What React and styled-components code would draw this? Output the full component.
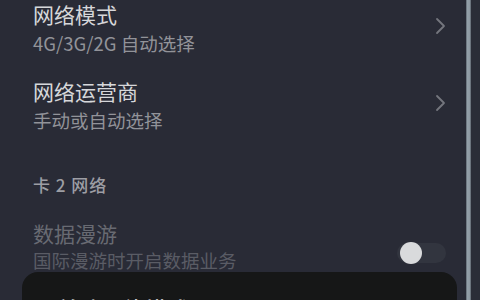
import React from "react";
import styled, { createGlobalStyle } from "styled-components";

const GlobalStyle = createGlobalStyle`
  html, body {
    margin: 0;
    padding: 0;
    background: #292b36;
    font-family: "Noto Sans CJK SC", "Noto Sans", sans-serif;
  }
`;

const Screen = styled.div`
  position: relative;
  width: 480px;
  height: 300px;
  overflow: hidden;
  display: flex;
  background: #292b36;
`;

const Content = styled.div`
  flex: 1;
  padding: 0 20px 0 33px;
`;

const Divider = styled.div`
  width: 5px;
  background: linear-gradient(90deg, #5d6670, #93a0a9 30%, #8e9aa3 70%, #5a626b);
`;

const Gutter = styled.div`
  width: 9px;
  background: #2a2d37;
`;

const Row = styled.div`
  display: flex;
  align-items: center;
  justify-content: space-between;
  margin-top: ${(p) => p.$gap || 0}px;
`;

const Texts = styled.div`
  display: flex;
  flex-direction: column;
`;

const Title = styled.div`
  font-size: 21px;
  line-height: 28px;
  color: ${(p) => (p.$disabled ? "#686a72" : "#d6d7da")};
`;

const Sub = styled.div`
  font-size: 18.5px;
  line-height: ${(p) => p.$lh || 30}px;
  color: ${(p) => (p.$disabled ? "#5a5c65" : "#929399")};
`;

const Section = styled.div`
  margin-top: 38px;
  font-size: 17px;
  line-height: 24px;
  font-weight: 500;
  letter-spacing: 1px;
  color: #9d9ea4;
`;

const Chevron = styled.svg`
  width: 12px;
  height: 18px;
  margin-top: -6px;
  flex-shrink: 0;
`;

const Switch = styled.div`
  position: relative;
  width: 49px;
  height: 20px;
  border-radius: 10px;
  background: #32353f;
  margin-top: 14px;
`;

const Knob = styled.div`
  position: absolute;
  left: 3px;
  top: -1px;
  width: 22px;
  height: 22px;
  border-radius: 50%;
  background: #d9dadc;
`;

const Sheet = styled.div`
  position: absolute;
  left: 22px;
  top: 272px;
  width: 435px;
  height: 120px;
  border-radius: 16px;
  background: #161717;
  padding: 21px 35px;
  box-sizing: border-box;
`;

const SheetTitle = styled.div`
  font-size: 22px;
  line-height: 30px;
  font-weight: 500;
  color: #e8e8ea;
`;

const ChevronIcon = () => (
  <Chevron viewBox="0 0 12 18">
    <path d="M3 2 L10 9 L3 16" fill="none" stroke="#74767e" strokeWidth="1.8" strokeLinecap="round" strokeLinejoin="round" />
  </Chevron>
);

const items = [
  { title: "网络模式", sub: "4G/3G/2G 自动选择", gap: 0 },
  { title: "网络运营商", sub: "手动或自动选择", gap: 19 },
];

export default function App() {
  return (
    <>
      <GlobalStyle />
      <Screen>
        <Content>
          {items.map(({ title, sub, gap }) => (
            <Row key={title} $gap={gap}>
              <Texts>
                <Title>{title}</Title>
                <Sub>{sub}</Sub>
              </Texts>
              <ChevronIcon />
            </Row>
          ))}
          <Section>卡 2 网络</Section>
          <Row $gap={22}>
            <Texts>
              <Title $disabled>数据漫游</Title>
              <Sub $disabled $lh={26}>国际漫游时开启数据业务</Sub>
            </Texts>
            <Switch>
              <Knob />
            </Switch>
          </Row>
        </Content>
        <Divider />
        <Gutter />
        <Sheet>
          <SheetTitle>首选网络模式</SheetTitle>
        </Sheet>
      </Screen>
    </>
  );
}
